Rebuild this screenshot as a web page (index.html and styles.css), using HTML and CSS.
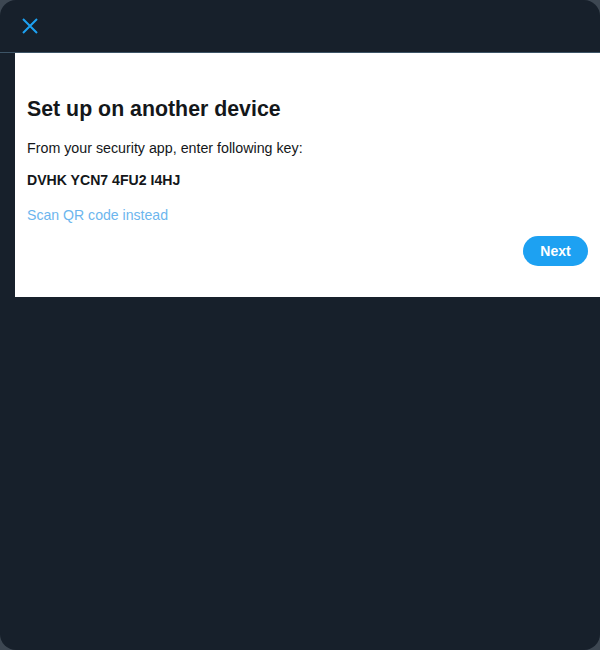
FILE: index.html
```html
<!DOCTYPE html>
<html>
<head>
<meta charset="utf-8">
<link rel="stylesheet" href="styles.css">
</head>
<body>
<div class="modal">
  <div class="header">
    <button class="close" aria-label="Close">
      <svg width="18" height="18" viewBox="0 0 18 18"><path d="M2 2 L16 16 M16 2 L2 16" stroke="#1da1f2" stroke-width="2" fill="none"/></svg>
    </button>
  </div>
  <div class="panel">
    <h1 class="title">Set up on another device</h1>
    <p class="desc">From your security app, enter following key:</p>
    <p class="key">DVHK YCN7 4FU2 I4HJ</p>
    <a class="link" href="#">Scan QR code instead</a>
    <div class="actions">
      <button class="next">Next</button>
    </div>
  </div>
</div>
</body>
</html>
```
FILE: styles.css
```css
* { box-sizing: border-box; }
html, body { margin: 0; padding: 0; }
body {
  background: #3d4752;
  width: 600px;
  height: 650px;
  font-family: "Liberation Sans", Arial, sans-serif;
}
.modal {
  width: 600px;
  height: 650px;
  background: #17202b;
  border-radius: 16px;
  overflow: hidden;
}
.header {
  height: 53px;
  border-bottom: 1px solid #3d5466;
  display: flex;
  align-items: center;
  padding-left: 21px;
}
.close {
  background: none;
  border: 0;
  padding: 0;
  width: 18px;
  height: 18px;
  margin-top: -1px;
  display: block;
}
.close svg { display: block; }
.panel {
  margin-left: 15px;
  background: #fff;
  height: 244px;
  padding: 44px 12px 0 12px;
  display: flex;
  flex-direction: column;
}
.title {
  margin: 0;
  font-size: 21.33px;
  line-height: 24px;
  font-weight: 700;
  color: #14171a;
}
.desc {
  margin: 17px 0 0 0;
  font-size: 14.25px;
  line-height: 20px;
  color: #14171a;
}
.key {
  margin: 12px 0 0 0;
  font-size: 14.1px;
  line-height: 20px;
  font-weight: 700;
  color: #14171a;
}
.link {
  margin-top: 15px;
  font-size: 14.1px;
  line-height: 20px;
  color: #6cb6ee;
  text-decoration: none;
  align-self: flex-start;
}
.actions {
  display: flex;
  justify-content: flex-end;
  margin-top: 11px;
}
.next {
  height: 30px;
  width: 65px;
  border: 0;
  border-radius: 15px;
  background: #1da1f2;
  color: #fff;
  font-family: "Liberation Sans", Arial, sans-serif;
  font-weight: 700;
  font-size: 14px;
  padding: 0;
}
```
